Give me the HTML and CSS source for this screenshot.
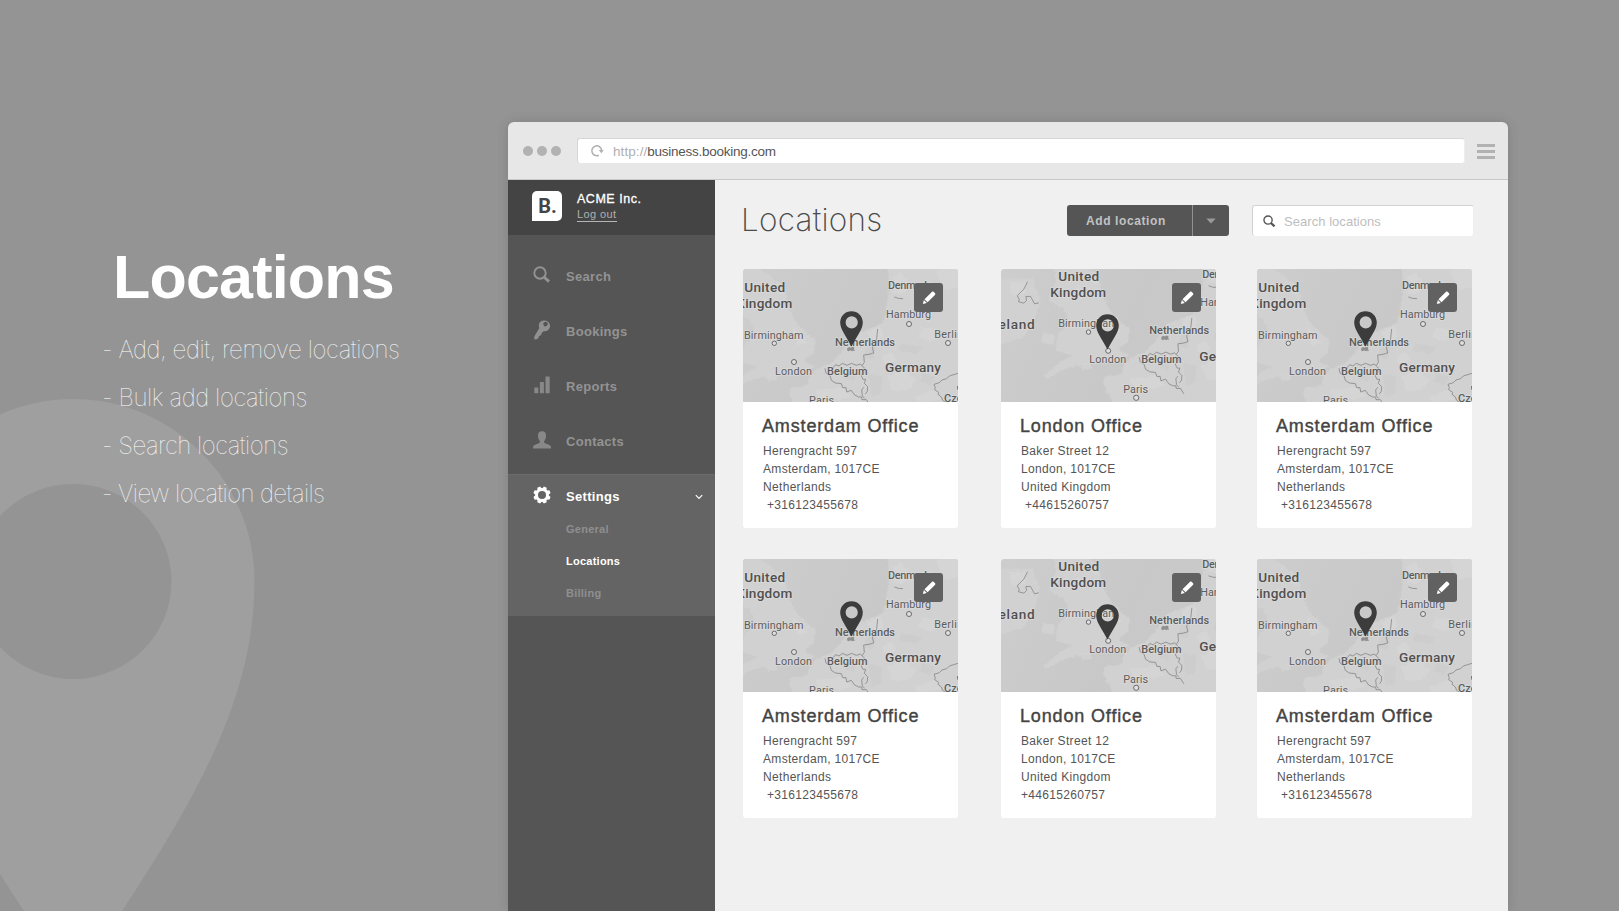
FILE: index.html
```
<!DOCTYPE html>
<html lang="en">
<head>
<meta charset="utf-8">
<title>Locations</title>
<link rel="stylesheet" href="styles.css">
</head>
<body>
<svg class="defs" width="0" height="0" aria-hidden="true">
  <defs>
    <filter id="rough" x="-5%" y="-5%" width="110%" height="110%">
      <feTurbulence type="fractalNoise" baseFrequency="0.09" numOctaves="4" seed="4" result="n"/>
      <feDisplacementMap in="SourceGraphic" in2="n" scale="12" xChannelSelector="R" yChannelSelector="G"/>
      <feGaussianBlur stdDeviation=".4"/>
    </filter>
    <!-- North Sea region: land masses, terrain patches and borders -->
    <symbol id="terrain" overflow="visible">
      <g transform="translate(-8 -9) scale(.33333)">
        <g filter="url(#rough)" fill="#d1d1d1">
          <path d="M460 0V100L452 160 440 192 400 208 352 226 330 262 292 308 236 332 222 352 218 376 165 384 160 400 200 480H720V0Z"/>
          <path d="M30 0L110 50 128 82 152 100 160 145 180 182 216 220 242 240 236 278 206 304 240 318 212 336 150 340 90 350 40 362-10 392-15 380 30 340 70 320 20 306 24 256 62 224 48 184 0 154 20 100 10 40Z"/>
          <path d="M-150 90L-50 90-26 154-52 234-86 270-160 290Z"/>
        </g>
        <g filter="url(#rough)" fill="#dcdcdc" opacity=".4">
          <path d="M470 50l30-10 20 24-14 40-30-6zM600 30l80-10v60l-50 10zM395 215l40-18 10 30-26 20zM455 350l50-20 40 30-26 30-48 4zM540 410l60-22 20 30-70 16zM440 290l30-14 14 24-30 16zM560 200l50 10-20 36-40-14z"/>
          <path d="M120 60l18 10 8 40-18-10zM90 110l20 24-14 20-20-24zM170 200l30 20 16 30-30 4zM90 350l30-8 10 16-30 8zM240 390l80-10 30 30-90 20zM-20 250l40 8-8 30-34-6zM-120 100l50 0 0 34-40 10z"/>
        </g>
        <g fill="#c8c8c8" filter="url(#rough)" opacity=".4">
          <path d="M400 240l24 20-10 40-24-6zM400 340l40 10 0 50-30 10zM500 250l60 10-10 20-60-6zM330 330l36 6-8 30-26-8zM560 340l40 10-14 24-30-10z"/>
        </g>
        <path class="border" d="M428 207l-3 28-3 16-10 10 4 18-14 4-16 2 2 22-7 10M270 325l3 14 12 8 4 14 12 8 18 2 4 12 10 0 2 13 14-5 10 14 12 6 9 0 1 8 13 0 10 16M292 326l10-12 10 4 10-8 14 6 14-6 14 6 12-4 12 12-2 16-8 6 6 12 8 0-4 12 10 10-1 14-6 8M386 382l-6 8 2 18 7 7M669 340l-26 8-8 8-14 4-8 8-16 5 4 10-2 6 12 8-2 6 10 8 4 10 12 8M478 111l12 4 14 1M-65 99l-11 22-20 20 6 10-2 8 16 4 8-8-2-12 14 0 12 22 13-3"/>
        <path d="M337 264l6-3 4 2 5-3 6 2-1 5 3 6-6-1-3 2-5-3-5 3-5-3z" fill="#8f8f8f"/>
        <path d="M666 378l10 6-8 6z" fill="#555"/>
      </g>
    </symbol>
    <symbol id="pin" viewBox="0 0 23 36">
      <path fill-rule="evenodd" fill="#3c3c3c" d="M11.500.3C17.800.3 22.800 5 22.800 11.600 22.800 18.500 17 25 11.500 35.600 6 25 .2 18.500.2 11.600.2 5 5.200.3 11.500.3ZM11.700 5.300a6.100 6.100 0 1 0 0 12.200 6.100 6.100 0 0 0 0-12.200Z"/>
    </symbol>
    <symbol id="pencil" viewBox="0 0 14 14">
      <path fill="#fff" d="M9.800.9c.6-.5 1.300-.5 1.900 0l1.200 1.200c.6.6.6 1.300 0 1.900L5.600 11.200 2.500 8.200ZM1.900 9l2.900 2.900L.8 13.100Z"/>
    </symbol>
    <symbol id="search" viewBox="0 0 18 18">
      <circle cx="7" cy="7" r="5.700" fill="none" stroke="currentColor" stroke-width="1.900"/>
      <path d="M11 11L16 15.700" stroke="currentColor" stroke-width="3"/>
    </symbol>
  </defs>
</svg>

<main class="stage">
  <svg class="backdrop" viewBox="0 0 260 911" width="260" height="911" aria-hidden="true">
    <path fill="#9f9f9f" fill-rule="evenodd" d="M73 399C173 399 254.500 481 254.500 581 254.500 690 205 785 122 911L73 985 24 911C-59 785-108.500 690-108.500 581-108.500 481-27 399 73 399ZM73 484A98.500 97.500 0 1 0 73 679 98.500 97.500 0 1 0 73 484Z"/>
  </svg>

  <section class="intro">
    <h1>Locations</h1>
    <ul>
      <li class="wide">- Add, edit, remove locations</li>
      <li class="wide">- Bulk add locations</li>
      <li>- Search locations</li>
      <li class="tight">- View location details</li>
    </ul>
  </section>

  <section class="window">
    <header class="chrome">
      <div class="dots"><i></i><i></i><i></i></div>
      <div class="address">
        <svg width="14" height="14" viewBox="0 0 14 14"><path d="M8.800 11.200A4.900 4.900 0 1 1 11.600 6.400" fill="none" stroke="#b0b0b0" stroke-width="1.500"/><path d="M8.800 6h5l-2.500 3.200z" fill="#b0b0b0"/></svg>
        <span class="url"><span class="proto">http://</span><span class="host">business.booking.com</span></span>
      </div>
      <div class="burger"><i></i><i></i><i></i></div>
    </header>

    <div class="body">
      <aside class="sidebar">
        <div class="account">
          <div class="logo">B.</div>
          <div class="who"><strong>ACME Inc.</strong><a>Log out</a></div>
        </div>
        <nav>
          <div class="item"><svg width="18" height="18"><use href="#search"/></svg><span>Search</span></div>
          <div class="item"><svg width="18" height="20" viewBox="0 0 18 20"><path fill="#919191" fill-rule="evenodd" d="M11.500.5a5.400 5.400 0 1 1-.8 10.700L8.500 13.200 8 15.300 6 16 5.500 18 3.200 19.600 1.300 19.300 1.300 16.500 6.200 8.300A5.400 5.400 0 0 1 11.500.5ZM12.200 1.900A2.200 2.200 0 1 0 13.600 6 2.200 2.200 0 0 0 12.200 1.900Z"/></svg><span>Bookings</span></div>
          <div class="item"><svg width="18" height="18" viewBox="0 0 18 18" fill="#888"><rect x="1.300" y="11.500" width="4" height="5.800" rx=".5"/><rect x="6.900" y="6" width="4" height="11.300" rx=".5"/><rect x="12.500" y=".5" width="4.200" height="16.800" rx=".5"/></svg><span>Reports</span></div>
          <div class="item"><svg width="20" height="18" viewBox="0 0 20 18" fill="#888"><path d="M10 .3C12.900.3 14.200 2 14 5 13.900 7.500 13 9 12.200 10v1.700C14 13 19 13.300 19 16.200v1.300H1v-1.300C1 13.300 6 13 7.800 11.700V10C7 9 6.100 7.500 6 5 5.800 2 7.100.3 10 .3Z"/></svg><span>Contacts</span></div>
          <div class="group">
            <div class="item on"><svg width="18" height="18" viewBox="-9 -9 18 18"><g fill="#fff"><path id="teeth" d="M-2-7L-1.500-8.600H1.500L2-7V7L1.500 8.600H-1.500L-2 7Z" transform="rotate(22.500)"/><use href="#teeth" transform="rotate(45)"/><use href="#teeth" transform="rotate(90)"/><use href="#teeth" transform="rotate(135)"/><circle r="6.900"/></g><circle r="4" fill="#646464"/></svg><span>Settings</span><svg class="chev" width="8" height="6" viewBox="0 0 8 6"><path d="M.8 1.200L4 4.400 7.200 1.200" fill="none" stroke="#fff" stroke-width="1.200"/></svg></div>
            <div class="sub">General</div>
            <div class="sub active">Locations</div>
            <div class="sub">Billing</div>
          </div>
        </nav>
      </aside>

      <div class="content">
        <div class="toolbar">
          <h2>Locations</h2>
          <div class="add"><span class="label">Add location</span><span class="drop"><svg width="10" height="6" viewBox="0 0 10 6"><path d="M.3.500h9.400L5 5.500z" fill="#999"/></svg></span></div>
          <div class="find"><svg width="13" height="13"><use href="#search"/></svg><span>Search locations</span></div>
        </div>

        <div class="grid">
          <article class="card">
            <div class="map">
              <svg class="geo" width="215" height="133"><use href="#terrain"/>
                <g class="labels"><text class="c" x="1.200" y="23" textLength="41">United</text><text class="c" x="-6.700" y="39.300" textLength="56">Kingdom</text><text class="m" x="145" y="20" textLength="42">Denmark</text><text x="143" y="48.700" textLength="45">Hamburg</text><text x="1" y="69.700" textLength="59.500">Birmingham</text><text x="191.200" y="68.700" textLength="29">Berlin</text><text class="m" x="92" y="76.700" textLength="60">Netherlands</text><text x="32" y="105.700" textLength="37">London</text><text class="m" x="84" y="105.700" textLength="40.500">Belgium</text><text class="c" x="142" y="103" textLength="56">Germany</text><text x="66" y="135" textLength="25">Paris</text><text class="m" x="201" y="132.500">Czech</text></g>
                <g class="towns"><circle cx="166" cy="55" r="2.500"/><circle cx="31.300" cy="74.300" r="2.200"/><circle cx="205" cy="74" r="2.500"/><circle cx="51" cy="93" r="2.500"/></g>
              </svg>
              <svg class="pin" width="23" height="36"><use href="#pin"/></svg>
              <span class="edit"><svg width="14" height="14"><use href="#pencil"/></svg></span>
            </div>
            <h3>Amsterdam Office</h3>
            <p>Herengracht 597<br>Amsterdam, 1017CE<br>Netherlands<br><span class="tel">+316123455678</span></p>
          </article>
          <article class="card london">
            <div class="map">
              <svg class="geo" width="215" height="133"><g transform="translate(56.200 -11.200)"><use href="#terrain"/>
                <g class="labels"><text class="c" x="1" y="23" textLength="41">United</text><text class="c" x="-7" y="39.300" textLength="56">Kingdom</text><text class="c" x="-68.500" y="71.200" textLength="46">Ireland</text><text class="m" x="145" y="20" textLength="42">Denmark</text><text x="143" y="48.700" textLength="45">Hamburg</text><text x="1" y="69.700" textLength="59.500">Birmingham</text><text class="m" x="92" y="76.700" textLength="60">Netherlands</text><text x="32" y="105.700" textLength="37">London</text><text class="m" x="84" y="105.700" textLength="40.500">Belgium</text><text class="c" x="142" y="103" textLength="56">Germany</text><text x="66" y="135" textLength="25">Paris</text></g>
                <g class="towns"><circle cx="31.300" cy="74.300" r="2.200"/><circle cx="51" cy="93" r="2.500"/><circle cx="79" cy="140" r="2.600"/></g></g>
              </svg>
              <svg class="pin" width="23" height="36"><use href="#pin"/></svg>
              <span class="edit"><svg width="14" height="14"><use href="#pencil"/></svg></span>
            </div>
            <h3>London Office</h3>
            <p>Baker Street 12<br>London, 1017CE<br>United Kingdom<br><span class="tel">+44615260757</span></p>
          </article>
          <article class="card">
            <div class="map">
              <svg class="geo" width="215" height="133"><use href="#terrain"/>
                <g class="labels"><text class="c" x="1.200" y="23" textLength="41">United</text><text class="c" x="-6.700" y="39.300" textLength="56">Kingdom</text><text class="m" x="145" y="20" textLength="42">Denmark</text><text x="143" y="48.700" textLength="45">Hamburg</text><text x="1" y="69.700" textLength="59.500">Birmingham</text><text x="191.200" y="68.700" textLength="29">Berlin</text><text class="m" x="92" y="76.700" textLength="60">Netherlands</text><text x="32" y="105.700" textLength="37">London</text><text class="m" x="84" y="105.700" textLength="40.500">Belgium</text><text class="c" x="142" y="103" textLength="56">Germany</text><text x="66" y="135" textLength="25">Paris</text><text class="m" x="201" y="132.500">Czech</text></g>
                <g class="towns"><circle cx="166" cy="55" r="2.500"/><circle cx="31.300" cy="74.300" r="2.200"/><circle cx="205" cy="74" r="2.500"/><circle cx="51" cy="93" r="2.500"/></g>
              </svg>
              <svg class="pin" width="23" height="36"><use href="#pin"/></svg>
              <span class="edit"><svg width="14" height="14"><use href="#pencil"/></svg></span>
            </div>
            <h3>Amsterdam Office</h3>
            <p>Herengracht 597<br>Amsterdam, 1017CE<br>Netherlands<br><span class="tel">+316123455678</span></p>
          </article>
          <article class="card">
            <div class="map">
              <svg class="geo" width="215" height="133"><use href="#terrain"/>
                <g class="labels"><text class="c" x="1.200" y="23" textLength="41">United</text><text class="c" x="-6.700" y="39.300" textLength="56">Kingdom</text><text class="m" x="145" y="20" textLength="42">Denmark</text><text x="143" y="48.700" textLength="45">Hamburg</text><text x="1" y="69.700" textLength="59.500">Birmingham</text><text x="191.200" y="68.700" textLength="29">Berlin</text><text class="m" x="92" y="76.700" textLength="60">Netherlands</text><text x="32" y="105.700" textLength="37">London</text><text class="m" x="84" y="105.700" textLength="40.500">Belgium</text><text class="c" x="142" y="103" textLength="56">Germany</text><text x="66" y="135" textLength="25">Paris</text><text class="m" x="201" y="132.500">Czech</text></g>
                <g class="towns"><circle cx="166" cy="55" r="2.500"/><circle cx="31.300" cy="74.300" r="2.200"/><circle cx="205" cy="74" r="2.500"/><circle cx="51" cy="93" r="2.500"/></g>
              </svg>
              <svg class="pin" width="23" height="36"><use href="#pin"/></svg>
              <span class="edit"><svg width="14" height="14"><use href="#pencil"/></svg></span>
            </div>
            <h3>Amsterdam Office</h3>
            <p>Herengracht 597<br>Amsterdam, 1017CE<br>Netherlands<br><span class="tel">+316123455678</span></p>
          </article>
          <article class="card london">
            <div class="map">
              <svg class="geo" width="215" height="133"><g transform="translate(56.200 -11.200)"><use href="#terrain"/>
                <g class="labels"><text class="c" x="1" y="23" textLength="41">United</text><text class="c" x="-7" y="39.300" textLength="56">Kingdom</text><text class="c" x="-68.500" y="71.200" textLength="46">Ireland</text><text class="m" x="145" y="20" textLength="42">Denmark</text><text x="143" y="48.700" textLength="45">Hamburg</text><text x="1" y="69.700" textLength="59.500">Birmingham</text><text class="m" x="92" y="76.700" textLength="60">Netherlands</text><text x="32" y="105.700" textLength="37">London</text><text class="m" x="84" y="105.700" textLength="40.500">Belgium</text><text class="c" x="142" y="103" textLength="56">Germany</text><text x="66" y="135" textLength="25">Paris</text></g>
                <g class="towns"><circle cx="31.300" cy="74.300" r="2.200"/><circle cx="51" cy="93" r="2.500"/><circle cx="79" cy="140" r="2.600"/></g></g>
              </svg>
              <svg class="pin" width="23" height="36"><use href="#pin"/></svg>
              <span class="edit"><svg width="14" height="14"><use href="#pencil"/></svg></span>
            </div>
            <h3>London Office</h3>
            <p>Baker Street 12<br>London, 1017CE<br>United Kingdom<br>+44615260757</p>
          </article>
          <article class="card">
            <div class="map">
              <svg class="geo" width="215" height="133"><use href="#terrain"/>
                <g class="labels"><text class="c" x="1.200" y="23" textLength="41">United</text><text class="c" x="-6.700" y="39.300" textLength="56">Kingdom</text><text class="m" x="145" y="20" textLength="42">Denmark</text><text x="143" y="48.700" textLength="45">Hamburg</text><text x="1" y="69.700" textLength="59.500">Birmingham</text><text x="191.200" y="68.700" textLength="29">Berlin</text><text class="m" x="92" y="76.700" textLength="60">Netherlands</text><text x="32" y="105.700" textLength="37">London</text><text class="m" x="84" y="105.700" textLength="40.500">Belgium</text><text class="c" x="142" y="103" textLength="56">Germany</text><text x="66" y="135" textLength="25">Paris</text><text class="m" x="201" y="132.500">Czech</text></g>
                <g class="towns"><circle cx="166" cy="55" r="2.500"/><circle cx="31.300" cy="74.300" r="2.200"/><circle cx="205" cy="74" r="2.500"/><circle cx="51" cy="93" r="2.500"/></g>
              </svg>
              <svg class="pin" width="23" height="36"><use href="#pin"/></svg>
              <span class="edit"><svg width="14" height="14"><use href="#pencil"/></svg></span>
            </div>
            <h3>Amsterdam Office</h3>
            <p>Herengracht 597<br>Amsterdam, 1017CE<br>Netherlands<br><span class="tel">+316123455678</span></p>
          </article>
        </div>
      </div>
    </div>
  </section>
</main>
</body>
</html>
```
FILE: styles.css
```
* { box-sizing: border-box; }
html, body { margin: 0; height: 911px; overflow: hidden; }
body { background: #949494; font-family: "Liberation Sans", Arial, sans-serif; color: #555; }
h1, h2, h3, p, ul { margin: 0; padding: 0; font-weight: 400; }
svg { display: block; flex: none; }
.defs { position: absolute; }

.stage { position: relative; width: 1619px; height: 911px; display: flex; overflow: hidden; }
.backdrop { position: absolute; left: 0; top: 0; }

.intro { position: relative; width: 508px; padding: 243px 0 0 102px; color: #fff; flex: none; }
.intro h1 { font-size: 61px; line-height: 68px; font-weight: 700; padding-left: 11px; letter-spacing: -0.8px; white-space: nowrap; }
.intro ul { list-style: none; padding-top: 15px; }
.intro li { font: 100 24px/48px Inter, sans-serif; white-space: nowrap; letter-spacing: -0.5px; }
.intro li.wide { letter-spacing: -0.4px; }
.intro li.tight { letter-spacing: -0.6px; }

.window { width: 1000px; margin-top: 122px; height: 789px; border-radius: 6px 6px 0 0; box-shadow: 0 0 12px rgba(0,0,0,.13); display: flex; flex-direction: column; overflow: hidden; flex: none; }
.chrome { height: 58px; background: #e7e7e7; border-bottom: 1px solid #c8c8c8; display: flex; align-items: center; padding-left: 15px; }
.dots { display: flex; gap: 4px; width: 54px; }
.dots i { width: 10px; height: 10px; border-radius: 50%; background: #b2b2b2; }
.address { width: 888px; height: 25px; background: #fff; border: 1px solid #d6d6d6; border-right-color: #eee; border-bottom: 0; border-radius: 3px; display: flex; align-items: center; padding-left: 12px; gap: 9px; font-size: 13.500px; }
.url { display: flex; letter-spacing: -0.26px; }
.proto { color: #b0b0b0; letter-spacing: .08px; }
.host { color: #555; }
.burger { margin-left: 12px; display: flex; flex-direction: column; gap: 3px; padding-top: 1px; }
.burger i { width: 18px; height: 3px; background: #b2b2b2; }

.body { display: flex; flex: 1; }
.sidebar { width: 207px; background: #555; flex: none; }
.account { height: 55px; background: #444; display: flex; padding: 11px 0 0 24px; }
.logo { width: 30px; height: 30px; background: #fff; border-radius: 5px 5px 5px 0; color: #444; font: 700 20px/31px Roboto, sans-serif; text-align: center; padding-left: 1px; }
.who { padding-left: 15px; display: flex; flex-direction: column; align-items: flex-start; }
.who strong { font: 500 12.500px/16px "Liberation Sans", sans-serif; color: #fff; letter-spacing: .52px; -webkit-text-stroke: .3px #fff; }
.who a { font: 300 11px/13px "Liberation Sans", sans-serif; color: #b0b0b0; border-bottom: 1px solid #b5b5b5; letter-spacing: .4px; margin-top: 1px; }

nav { padding-top: 14px; }
.item { height: 55px; display: flex; align-items: center; color: #939393; font-weight: 700; font-size: 13px; letter-spacing: .3px; padding-left: 24px; }
.item > svg:first-child { margin: -3px 0 0 0; width: 20px; }
.item > span { padding-left: 14px; }
.group { background: #646464; height: 142px; margin-top: 5px; border-top: 1px solid #6b6b6b; }
.group .item { height: 43px; color: #fff; }
.group .chev { margin-left: auto; margin-right: 12px; }
.sub { height: 32px; line-height: 22px; padding-left: 58px; color: #8f8f8f; font-weight: 700; font-size: 11px; letter-spacing: .25px; }
.sub.active { color: #fff; }

.content { flex: 1; background: #f0f0f0; padding: 25px 0 0 28px; }
.toolbar { display: flex; height: 31px; }
.toolbar h2 { width: 324px; font: 200 31.500px/30px Inter, sans-serif; letter-spacing: .25px; margin-left: -2px; color: #4a4a4a; }
.add { display: flex; width: 162px; background: #555; border-radius: 3px; color: #c2c2c2; font: 700 12px/32px "Liberation Sans", sans-serif; letter-spacing: .6px; margin-left: 2px; }
.add .label { width: 126px; padding-left: 19px; border-right: 1px solid #919191; }
.add .drop { flex: 1; display: flex; align-items: center; justify-content: center; }
.find { width: 222px; margin-left: 23px; height: 31px; background: #fff; border: 1px solid #d2d2d2; border-right-color: #eee; border-bottom: 0; border-radius: 3px; display: flex; align-items: center; padding-left: 10px; color: #555; font-size: 13px; }
.find span { color: #bebebe; padding: 1px 0 0 8px; letter-spacing: .05px; }
.find svg { width: 13px; height: 13px; }

.grid { display: grid; grid-template-columns: 258px 256px 215px; grid-auto-rows: 259px; row-gap: 31px; padding-top: 33px; }
.card { width: 215px; background: #fff; border-radius: 3px; overflow: hidden; }
.map { position: relative; height: 133px; background: linear-gradient(115deg, #cdcdcd, #c8c8c8 55%, #cbcbcb); overflow: hidden; }
.border { fill: none; stroke: #858585; stroke-width: 2.400; }
.labels { font: 400 10.800px Roboto, sans-serif; fill: #5c5c5c; paint-order: stroke; stroke: rgba(225,225,225,.6); stroke-width: 1.500px; }
.labels .c { font-size: 13.600px; font-weight: 500; fill: #505050; }
.labels .m { font-weight: 500; font-size: 11px; }
.towns { fill: #e0e0e0; stroke: #6a6a6a; stroke-width: 1; }
.pin { position: absolute; left: 97px; top: 42px; }
.london .pin { left: 95px; top: 45px; }
.edit { position: absolute; left: 171px; top: 14px; width: 29px; height: 29px; border-radius: 3px; background: #616161; display: grid; place-items: center; }
.card h3 { font-size: 18px; line-height: 22px; padding: 13px 0 0 19px; color: #444; letter-spacing: .85px; -webkit-text-stroke: .4px #444; white-space: nowrap; }
.card p { font-size: 12px; line-height: 18px; padding: 5px 0 0 20px; letter-spacing: .32px; color: #555; white-space: nowrap; }
.tel { padding-left: 4px; }
```
